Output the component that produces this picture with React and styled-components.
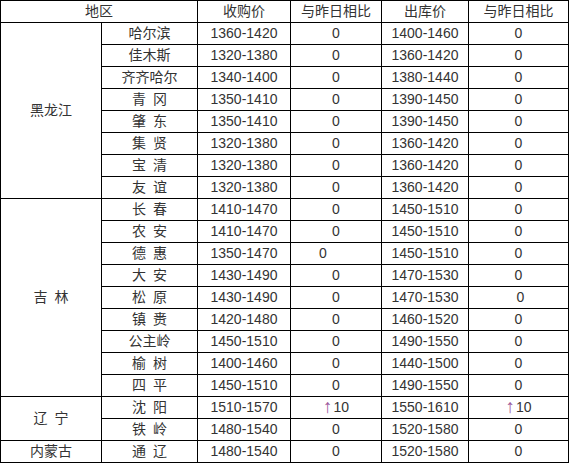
import React from 'react';
import styled, { createGlobalStyle } from 'styled-components';

const GlobalStyle = createGlobalStyle`
  html, body {
    margin: 0;
    padding: 0;
    background: #fff;
  }
`;

const regions = [
  {
    name: '黑龙江',
    rows: [
      ['哈尔滨', '1360-1420', '0', '1400-1460', '0'],
      ['佳木斯', '1320-1380', '0', '1360-1420', '0'],
      ['齐齐哈尔', '1340-1400', '0', '1380-1440', '0'],
      ['青\u2002冈', '1350-1410', '0', '1390-1450', '0'],
      ['肇\u2002东', '1350-1410', '0', '1390-1450', '0'],
      ['集\u2002贤', '1320-1380', '0', '1360-1420', '0'],
      ['宝\u2002清', '1320-1380', '0', '1360-1420', '0'],
      ['友\u2002谊', '1320-1380', '0', '1360-1420', '0'],
    ],
  },
  {
    name: '吉\u2002林',
    rows: [
      ['长\u2002春', '1410-1470', '0', '1450-1510', '0'],
      ['农\u2002安', '1410-1470', '0', '1450-1510', '0'],
      ['德\u2002惠', '1350-1470', { text: '0', shift: -13 }, '1450-1510', '0'],
      ['大\u2002安', '1430-1490', '0', '1470-1530', '0'],
      ['松\u2002原', '1430-1490', '0', '1470-1530', { text: '0', shift: 2 }],
      ['镇\u2002赉', '1420-1480', '0', '1460-1520', '0'],
      ['公主岭', '1450-1510', '0', '1490-1550', '0'],
      ['榆\u2002树', '1400-1460', '0', '1440-1500', '0'],
      ['四\u2002平', '1450-1510', '0', '1490-1550', '0'],
    ],
  },
  {
    name: '辽\u2002宁',
    rows: [
      ['沈\u2002阳', '1510-1570', { text: '10', up: true }, '1550-1610', { text: '10', up: true }],
      ['铁\u2002岭', '1480-1540', '0', '1520-1580', '0'],
    ],
  },
  {
    name: '内蒙古',
    rows: [['通\u2002辽', '1480-1540', '0', '1520-1580', '0']],
  },
];

const Grid = styled.div`
  display: grid;
  grid-template-columns: 100px 95px 92px 90px 86px 99px;
  grid-auto-rows: 21px;
  gap: 1px;
  padding: 1px;
  width: 569px;
  box-sizing: border-box;
  background: #000;
  font-family: "Liberation Sans", Arial, "Noto Sans CJK SC", sans-serif;
  font-size: 14px;
  color: #333;
`;

const Cell = styled.div`
  background: #fff;
  display: flex;
  align-items: center;
  justify-content: center;
  line-height: 21px;
  white-space: pre;
  grid-column: ${(p) => (p.$cols ? `span ${p.$cols}` : 'auto')};
  grid-row: ${(p) => (p.$rows ? `span ${p.$rows}` : 'auto')};
  padding-left: ${(p) => (p.$shift > 0 ? p.$shift * 2 : 0)}px;
  padding-right: ${(p) => (p.$shift < 0 ? -p.$shift * 2 : 0)}px;
`;

const Arrow = styled.span`
  color: #9c5a9c;
  font-size: 19px;
  line-height: 1;
  margin-right: 1px;
  position: relative;
  top: -1px;
`;

function Value({ v }) {
  if (typeof v === 'string') return <Cell>{v}</Cell>;
  return (
    <Cell $shift={v.shift || 0}>
      {v.up && <Arrow>↑</Arrow>}
      {v.text}
    </Cell>
  );
}

export default function App() {
  return (
    <>
      <GlobalStyle />
      <Grid>
        <Cell $cols={2}>地区</Cell>
        <Cell>收购价</Cell>
        <Cell>与昨日相比</Cell>
        <Cell>出库价</Cell>
        <Cell>与昨日相比</Cell>
        {regions.map((region) => (
          <React.Fragment key={region.name}>
            <Cell $rows={region.rows.length}>{region.name}</Cell>
            {region.rows.map((row) => (
              <React.Fragment key={row[0]}>
                {row.map((v, i) => (
                  <Value key={i} v={v} />
                ))}
              </React.Fragment>
            ))}
          </React.Fragment>
        ))}
      </Grid>
    </>
  );
}
